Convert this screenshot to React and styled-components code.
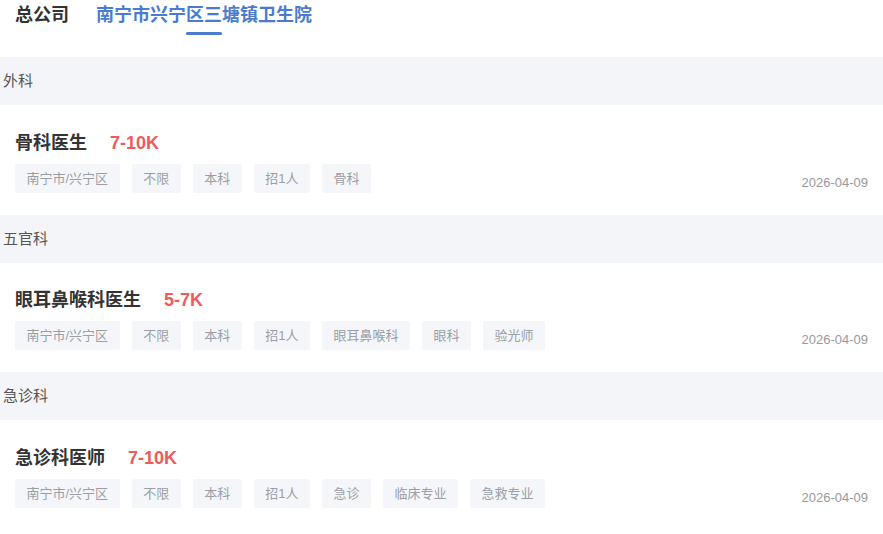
import React from "react";
import styled, { createGlobalStyle } from "styled-components";

const Global = createGlobalStyle`
  html, body { margin: 0; padding: 0; background: #fff; }
  body { font-family: "Liberation Sans", "Noto Sans CJK SC", sans-serif; }
`;

const Page = styled.div`
  width: 883px;
  background: #fff;
`;

const TabBar = styled.div`
  height: 57px;
  display: flex;
  align-items: flex-start;
  gap: 27px;
  padding-left: 15px;
  box-sizing: border-box;
`;

const Tab = styled.div`
  display: flex;
  flex-direction: column;
  align-items: center;
  padding-top: 4px;
  font-size: 18px;
  line-height: 22px;
  font-weight: 700;
  color: ${(p) => (p.$active ? "#4b7bcd" : "#333")};
`;

const Underline = styled.div`
  margin-top: 6px;
  width: 36px;
  height: 3px;
  border-radius: 2px;
  background: #4b7bcd;
`;

const SectionHeader = styled.div`
  height: 48px;
  line-height: 48px;
  padding-left: 3px;
  background: #f4f5f8;
  font-size: 15px;
  color: #555;
`;

const Card = styled.div`
  height: 109.5px;
  box-sizing: border-box;
  padding: 24.5px 15px 0;
`;

const TitleRow = styled.div`
  display: flex;
  align-items: center;
  gap: 23px;
  height: 26px;
  line-height: 26px;
`;

const Title = styled.span`
  font-size: 18px;
  font-weight: 700;
  color: #333;
`;

const Salary = styled.span`
  font-size: 18px;
  font-weight: 700;
  color: #f05a5b;
`;

const BottomRow = styled.div`
  margin-top: 8px;
  display: flex;
  justify-content: space-between;
  align-items: flex-end;
`;

const Tags = styled.div`
  display: flex;
  gap: 12px;
`;

const Tag = styled.span`
  height: 29px;
  line-height: 29px;
  padding: 0 11.5px;
  border-radius: 2px;
  background: #f5f6f9;
  font-size: 13px;
  color: #9a9ea6;
`;

const DateText = styled.span`
  font-size: 13px;
  line-height: 15px;
  margin-bottom: 3px;
  color: #999;
`;

const sections = [
  {
    name: "外科",
    jobs: [
      {
        title: "骨科医生",
        salary: "7-10K",
        tags: ["南宁市/兴宁区", "不限", "本科", "招1人", "骨科"],
        date: "2026-04-09",
      },
    ],
  },
  {
    name: "五官科",
    jobs: [
      {
        title: "眼耳鼻喉科医生",
        salary: "5-7K",
        tags: ["南宁市/兴宁区", "不限", "本科", "招1人", "眼耳鼻喉科", "眼科", "验光师"],
        date: "2026-04-09",
      },
    ],
  },
  {
    name: "急诊科",
    jobs: [
      {
        title: "急诊科医师",
        salary: "7-10K",
        tags: ["南宁市/兴宁区", "不限", "本科", "招1人", "急诊", "临床专业", "急救专业"],
        date: "2026-04-09",
      },
    ],
  },
];

export default function App() {
  return (
    <Page>
      <Global />
      <TabBar>
        <Tab>总公司</Tab>
        <Tab $active>
          南宁市兴宁区三塘镇卫生院
          <Underline />
        </Tab>
      </TabBar>
      {sections.map((s) => (
        <React.Fragment key={s.name}>
          <SectionHeader>{s.name}</SectionHeader>
          {s.jobs.map((j) => (
            <Card key={j.title}>
              <TitleRow>
                <Title>{j.title}</Title>
                <Salary>{j.salary}</Salary>
              </TitleRow>
              <BottomRow>
                <Tags>
                  {j.tags.map((t) => (
                    <Tag key={t}>{t}</Tag>
                  ))}
                </Tags>
                <DateText>{j.date}</DateText>
              </BottomRow>
            </Card>
          ))}
        </React.Fragment>
      ))}
    </Page>
  );
}
